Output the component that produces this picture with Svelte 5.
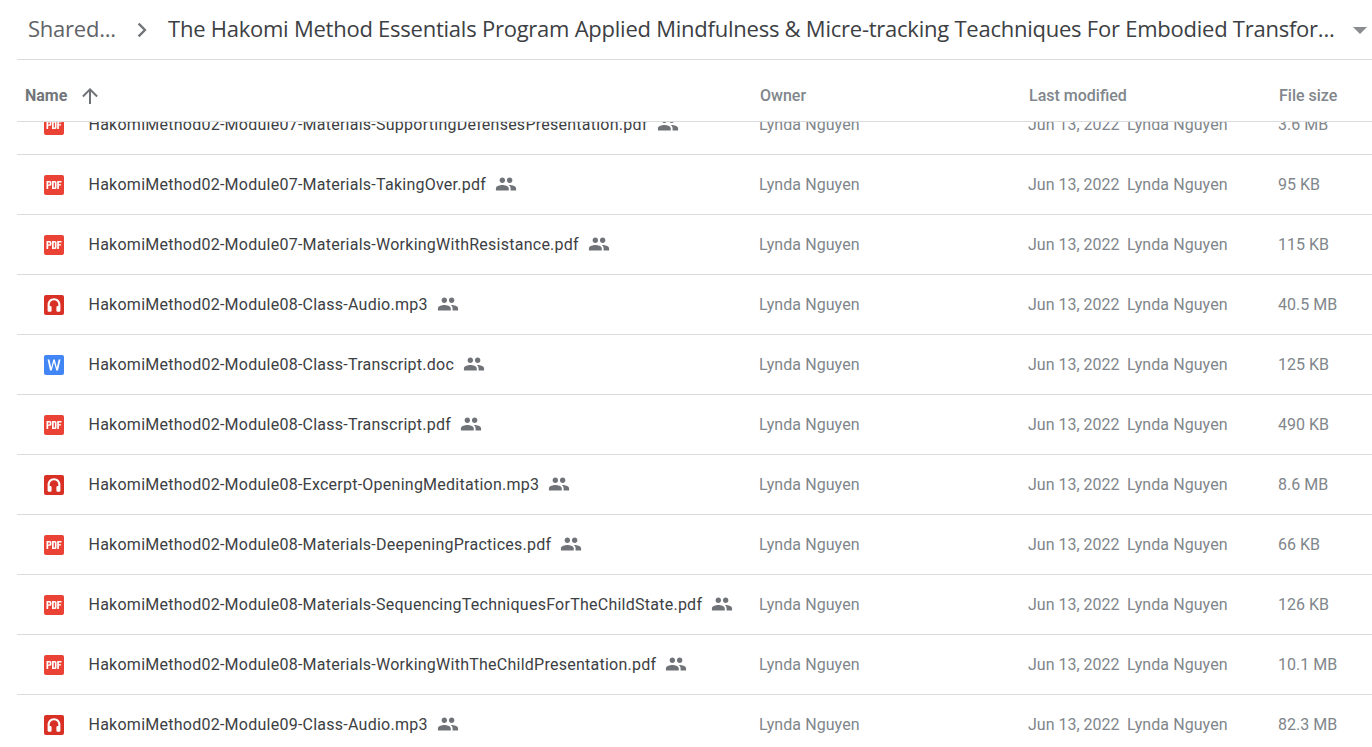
<script>
  const rows = [
    ['pdf', 'HakomiMethod02-Module07-Materials-SupportingDefensesPresentation.pdf', '3.6 MB'],
    ['pdf', 'HakomiMethod02-Module07-Materials-TakingOver.pdf', '95 KB'],
    ['pdf', 'HakomiMethod02-Module07-Materials-WorkingWithResistance.pdf', '115 KB'],
    ['audio', 'HakomiMethod02-Module08-Class-Audio.mp3', '40.5 MB'],
    ['word', 'HakomiMethod02-Module08-Class-Transcript.doc', '125 KB'],
    ['pdf', 'HakomiMethod02-Module08-Class-Transcript.pdf', '490 KB'],
    ['audio', 'HakomiMethod02-Module08-Excerpt-OpeningMeditation.mp3', '8.6 MB'],
    ['pdf', 'HakomiMethod02-Module08-Materials-DeepeningPractices.pdf', '66 KB'],
    ['pdf', 'HakomiMethod02-Module08-Materials-SequencingTechniquesForTheChildState.pdf', '126 KB'],
    ['pdf', 'HakomiMethod02-Module08-Materials-WorkingWithTheChildPresentation.pdf', '10.1 MB'],
    ['audio', 'HakomiMethod02-Module09-Class-Audio.mp3', '82.3 MB']
  ];
</script>

<div class="page">
  <header class="crumbs">
    <span class="parent">Shared...</span>
    <svg class="chev" width="12" height="16" viewBox="0 0 12 16"><path d="M2.4 0.8 0.8 2.4 6.4 8 .8 13.6l1.6 1.6L9.6 8z" fill="#6f7276"/></svg>
    <span class="title">The Hakomi Method Essentials Program Applied Mindfulness &amp; Micre-tracking Teachniques For Embodied Transfor...</span>
    <svg class="caret" width="14" height="7" viewBox="0 0 14 7"><path d="M0 0h14L7 7z" fill="#8a8c8f"/></svg>
  </header>

  <div class="cols">
    <div class="c-name"><b>Name</b>
      <svg width="18" height="18" viewBox="0 0 18 18"><path d="M9 1 1.2 8.8l1.4 1.4L8 4.8V17h2V4.8l5.4 5.4 1.4-1.4z" fill="#6f7276"/></svg>
    </div>
    <div class="c-owner head-owner">Owner</div>
    <div class="c-mod head-mod">Last modified</div>
    <div class="c-size head-size">File size</div>
  </div>

  <div class="list">
    <div class="inner">
      {#each rows as [kind, name, size]}
        <div class="row">
          <div class="c-name file">
            <span class="icon {kind}">
              {#if kind === 'pdf'}
                <svg width="20" height="20" viewBox="0 0 20 20"><rect width="20" height="20" rx="2" fill="#ea4335"/><path fill="#fff" fill-rule="evenodd" d="M2.5 6h3.4q1.5 0 1.5 1.5v1.8q0 1.5-1.5 1.5H4.2V14H2.5zM4.2 7.4v2h1.2q.4 0 .4-.4V7.8q0-.4-.4-.4zM8 6h2.9q1.6 0 1.6 1.6v4.8q0 1.6-1.6 1.6H8zM9.7 7.4v5.2h.7q.5 0 .5-.5V7.9q0-.5-.5-.5zM13.2 6h4.3v1.4h-2.6v1.8h2.2v1.4h-2.2V14h-1.7z"/></svg>
              {:else if kind === 'audio'}
                <svg width="20" height="20" viewBox="0 0 20 20"><rect width="20" height="20" rx="2" fill="#d93025"/><path fill="#fff" d="M10 3.2c-3.6 0-6.4 2.8-6.4 6.4v5.9q0 1.2 1.2 1.2h1.6q1.2 0 1.2-1.2v-3.3q0-1.2-1.2-1.2H5.7V9.6C5.7 7.2 7.6 5.3 10 5.3s4.3 1.9 4.3 4.3V11h-.7q-1.2 0-1.2 1.2v3.3q0 1.2 1.2 1.2h1.6q1.2 0 1.2-1.2V9.6c0-3.6-2.8-6.4-6.4-6.4z"/></svg>
              {:else}
                <svg width="20" height="20" viewBox="0 0 20 20"><rect width="20" height="20" rx="2" fill="#4285f4"/><path fill="#fff" d="M3.6 4.5h1.8l1.9 8.1 2-8.1h1.5l2 8.1 1.9-8.1h1.8L14 15.5h-1.7L10 7.2 7.7 15.5H6z"/></svg>
              {/if}
            </span>
            <span class="fname">{name}</span>
            <svg class="people" width="22" height="22" viewBox="0 0 24 24"><path fill="#6f7276" d="M16 11c1.66 0 2.99-1.34 2.99-3S17.66 5 16 5s-3 1.34-3 3 1.34 3 3 3zm-8 0c1.66 0 2.99-1.34 2.99-3S9.66 5 8 5 5 6.34 5 8s1.34 3 3 3zm0 2c-2.33 0-7 1.17-7 3.5V19h14v-2.5C15 14.17 10.33 13 8 13zm8 0c-.29 0-.62.02-.97.05C16.19 13.89 17 15.02 17 16.5V19h6v-2.5c0-2.33-4.67-3.5-7-3.5z"/></svg>
          </div>
          <div class="c-owner cell">Lynda Nguyen</div>
          <div class="c-mod cell"><span class="date">Jun 13, 2022</span><span class="by">Lynda Nguyen</span></div>
          <div class="c-size cell">{size}</div>
        </div>
      {/each}
    </div>
  </div>
</div>

<style>
  :global(body) { margin: 0; background: #fff; overflow: hidden; }
  .page {
    height: 747px; width: 1372px; display: flex; flex-direction: column;
    font-family: Roboto, "Liberation Sans", sans-serif; overflow: hidden;
  }
  .crumbs {
    height: 59px; margin-left: 17px; border-bottom: 1px solid #dadce0;
    display: flex; align-items: center; flex: none;
    font-family: "Open Sans", Roboto, sans-serif; font-size: 22px; letter-spacing: -.24px;
  }
  .parent, .title { margin-bottom: 4px; }
  .parent { margin-left: 11px; color: #5f6368; width: 109px; }
  .chev { flex: none; }
  .title { margin-left: 19px; color: #3c4043; white-space: nowrap; width: 1168px; }
  .caret { margin-left: 17px; margin-top: 1px; flex: none; }
  .cols, .row { display: flex; margin-left: 17px; }
  .cols {
    height: 51px; padding-top: 10px; flex: none; align-items: center; border-bottom: 1px solid #dadce0;
    font-size: 16px; color: #80868b; font-weight: 500;
  }
  .cols .c-name { padding-left: 8px; box-sizing: border-box; }
  .cols b { font-weight: 700; color: #72767a; }
  .cols svg { margin-left: 14px; }
  .c-name { width: 741px; display: flex; align-items: center; flex: none; }
  .c-owner { width: 270px; flex: none; }
  .c-mod { width: 250px; flex: none; display: flex; }
  .c-size { flex: 1; }
  .head-owner { margin-left: 2px; width: 269px; }
  .cell.c-owner { margin-left: 1px; width: 269px; letter-spacing: .08px; }
  .by { letter-spacing: .08px; }
  .list { flex: 1; overflow: hidden; }
  .inner { margin-top: -27px; }
  .row {
    height: 59px; border-bottom: 1px solid #dadce0; align-items: center;
    font-size: 16px; color: #80868b;
  }
  .file { padding-left: 27px; box-sizing: border-box; }
  .icon { width: 20px; height: 20px; display: block; flex: none; }
  .icon svg { display: block; }
  .fname { margin-left: 24.5px; color: #3c4043; white-space: nowrap; font-weight: 400; letter-spacing: .25px; }
  .people { margin-left: 9px; margin-bottom: 2px; }
  .date { width: 99px; }
</style>
